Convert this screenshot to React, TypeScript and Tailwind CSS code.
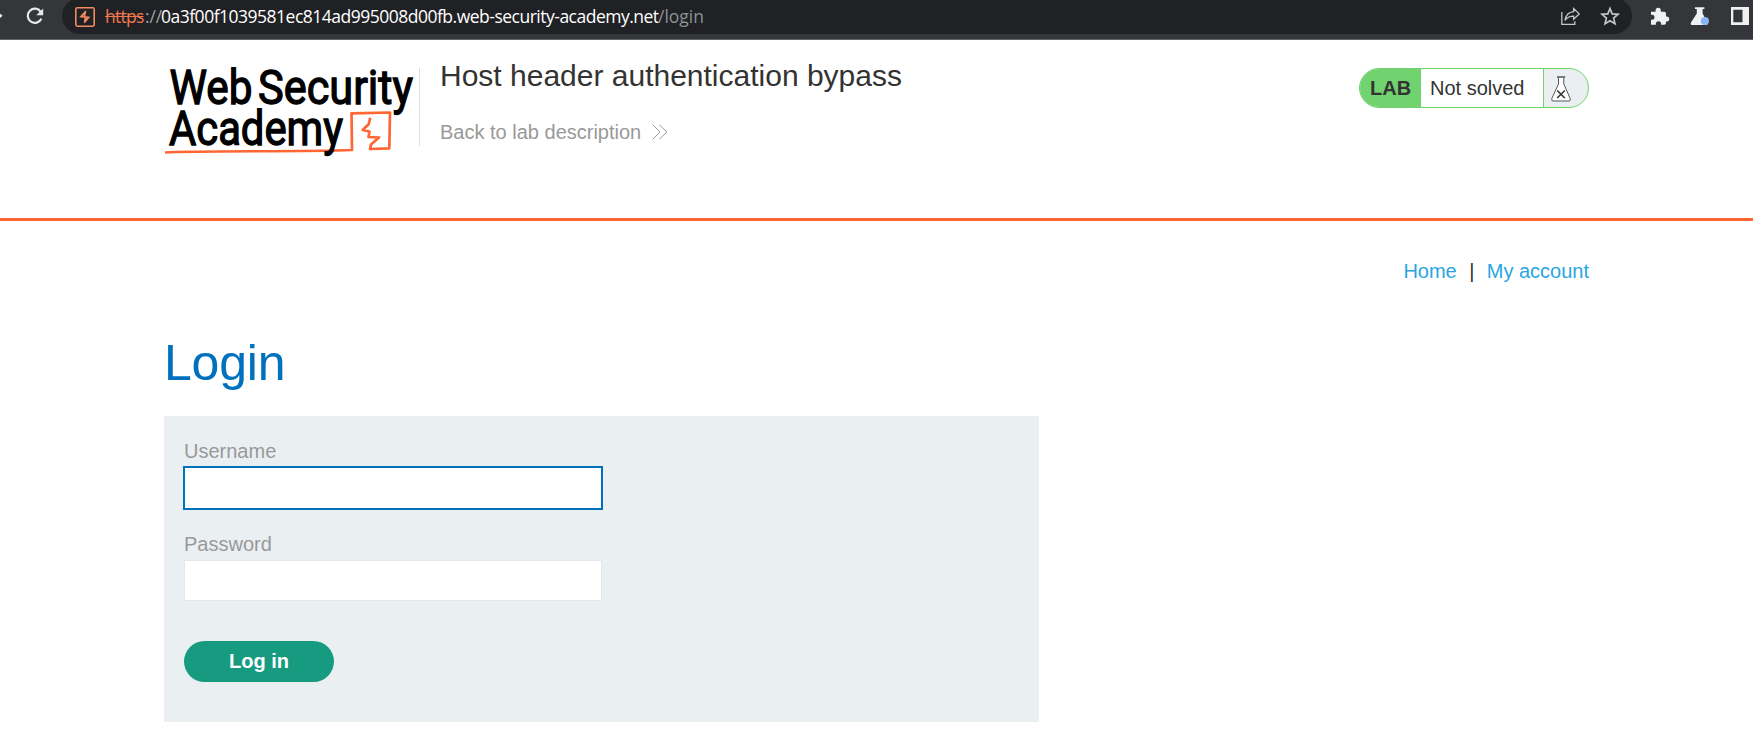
const SANS = "font-['Liberation_Sans',Arial,sans-serif]";

function BrowserBar() {
  return (
    <div className="flex h-10 w-full items-start overflow-hidden border-b border-[#646467] bg-[#35363a]">
      <svg className="h-[34px] w-[62px] shrink-0" viewBox="0 0 62 34" fill="none">
        <path d="M-2 11.5 L2.5 15.7 L-2 20" fill="#f1f1f2" />
        <path d="M40.8 11.8 A7.1 7.1 0 1 0 41.4 18.6" stroke="#e6e7e9" strokeWidth="2.2" />
        <path d="M43.2 8.5 V15.2 H36.2 Z" fill="#e6e7e9" />
      </svg>
      <div className="-mt-0.5 flex h-9 w-[1570px] shrink-0 items-center rounded-full bg-[#202124] pl-[13px]">
        <svg className="mt-0.5 mr-[10px] h-5 w-5 shrink-0" viewBox="0 0 20 20" fill="none">
          <rect x="0.8" y="0.8" width="18.4" height="18.4" rx="1.6" stroke="#f28b60" strokeWidth="1.6" />
          <path d="M11 4.2 L6 9.6 L13.6 10.4 L9.2 15.8 M10.2 5.4 L9.4 9.6 M10.6 10.4 L9.6 14.6" stroke="#f28b60" strokeWidth="1.7" />
        </svg>
        <div className="flex grow items-center whitespace-pre pt-px font-['Open_Sans','Noto_Sans',sans-serif] text-[17.5px] leading-none">
          <span className="w-[40px] tracking-[-0.75px] text-[#f0784f] line-through">https</span>
          <span className="w-4 tracking-[-0.1px] text-[#9aa0a6]">://</span>
          <span className="w-[497px] tracking-[-0.5px] text-white">
            0a3f00f1039581ec814ad995008d00fb.web-security-academy.net
          </span>
          <span className="text-[#8d9196]">/login</span>
        </div>
        <svg className="mt-0.5 mr-3 h-6 w-[60px] shrink-0" viewBox="0 0 60 24" fill="none" stroke="#c4c5c7">
          <path d="M1.8 7 V19.4 H14.8 V16.3" strokeWidth="1.3" />
          <path d="M13.6 3.5 L19.2 8.9 L13.6 14.2 V11.2 C9.5 11.2 7 12.3 5 15.4 C5.6 10.7 8.7 7.2 13.6 6.6 Z" strokeWidth="1.3" />
          <path d="M50 3.5 L52.2 8.9 L58 9.3 L53.6 13.1 L55 18.8 L50 15.7 L45 18.8 L46.4 13.1 L42 9.3 L47.8 8.9 Z" strokeWidth="1.7" />
        </svg>
      </div>
      <svg className="h-[34px] w-[121px] shrink-0" viewBox="0 0 121 34" fill="none">
        <path d="M19 12.2 h4.6 v-1.4 a2.6 2.6 0 0 1 5.2 0 v1.4 h3.4 a1.8 1.8 0 0 1 1.8 1.8 v3 h.7 a2.5 2.5 0 0 1 0 5 H34 v1.6 a1.7 1.7 0 0 1 -1.7 1.7 h-3.2 v-1 a2.6 2.6 0 0 0 -5.2 0 v1 H19 v-5 h1 a2.5 2.5 0 0 0 0-5 h-1 Z" fill="#eff0f2" transform="translate(0 -0.5)" />
        <path d="M63 7.2 H72.4 V9 H70.6 V13.5 L75.5 22.5 Q76 25 74 25 H60 Q58 25 59 22.5 L64.8 13.5 V9 H63 Z" fill="#eff0f2" />
        <circle cx="72.9" cy="21" r="4.1" fill="#8ab4f8" />
        <path fillRule="evenodd" d="M99 7 H117 V25 H99 Z M101.3 9.8 V22.3 H110.5 V9.8 Z" fill="#eff0f2" />
      </svg>
    </div>
  );
}

function Logo() {
  return (
    <svg className="-ml-1 h-[110px] w-[257px] shrink-0 overflow-visible" viewBox="160 50 257 110" fill="none">
      <g fill="#000" stroke="#000" strokeWidth="1.3" className="font-['Roboto',sans-serif] font-normal" fontSize="47.5">
        <text x="169.5" y="103.9" textLength="83" lengthAdjust="spacingAndGlyphs">Web</text>
        <text x="258" y="103.9" textLength="155" lengthAdjust="spacingAndGlyphs">Security</text>
      </g>
      <path d="M165 152.5 C200 150.5 300 152 352 150 L351.5 113.3 L390 112.5 L389.3 148.3 L370 149 L371 144.5 L379 137.5 L368.5 137 L369.5 131.5 L362.7 130 L368.8 124 L370.2 117.7" stroke="#ff6633" strokeWidth="2.7" strokeLinejoin="round" />
      <text x="169" y="144.7" textLength="174" lengthAdjust="spacingAndGlyphs" fontSize="47.5" fill="#000" stroke="#000" strokeWidth="1.3" className="font-['Roboto',sans-serif] font-normal">Academy</text>
    </svg>
  );
}

function LabStatus() {
  return (
    <div className="mt-7 flex h-10 w-[230px] shrink-0 overflow-hidden rounded-full border border-[#71d36f] bg-[#eaeff2] text-[20px] leading-[38px] text-[#333332]">
      <div className="w-[61px] bg-[#71d36f] pl-2.5 font-bold">LAB</div>
      <div className="w-[122px] bg-white pl-[9px]">Not solved</div>
      <div className="grow border-l border-[#71d36f]">
        <svg className="mt-[7px] ml-[7px] h-[26px] w-5" viewBox="0 0 20 26" fill="none">
          <path d="M7.5 1.5 V8 L0.8 22.5 Q0.3 25 2 25 H18 Q19.8 25 19.2 22.5 L12.8 8 V1.5" fill="#fff" stroke="#55565a" />
          <path d="M6 1 H14.2" stroke="#55565a" strokeWidth="1.4" />
          <path d="M6.2 14.5 L13.8 22 M13.8 14.5 L6.2 22" stroke="#333" strokeWidth="1.6" />
        </svg>
      </div>
    </div>
  );
}

function AcademyHeader() {
  return (
    <header className="flex h-[181px] items-start border-b-[3px] border-[#ff6633] pr-[164px] pl-[164px]">
      <div className="mt-2.5 flex">
        <Logo />
      </div>
      <div className="mt-7 ml-0.5 h-[78px] w-px shrink-0 bg-[#dddddd]" />
      <div className="ml-5 flex grow flex-col">
        <h2 className="mt-[18px] text-[30px] leading-9 text-[#333332]">Host header authentication bypass</h2>
        <a className="mt-[26px] flex items-center text-[20px] leading-6 text-[#999999]">
          Back to lab description
          <svg className="ml-[11px] h-4 w-4" viewBox="0 0 16 16" fill="none" stroke="#999">
            <path d="M0.7 0.7 L8 8 L0.7 15.3 M7.5 0.7 L14.8 8 L7.5 15.3" />
          </svg>
        </a>
      </div>
      <LabStatus />
    </header>
  );
}

export default function App() {
  return (
    <div className={`${SANS} h-[754px] w-full overflow-hidden bg-white`}>
      <BrowserBar />
      <AcademyHeader />
      <main className="px-[164px]">
        <nav className="flex justify-end pt-[38px] text-[20px] leading-6 text-[#29a5e2]">
          <a>Home</a>
          <span className="w-[30px] text-center text-[#333332]">|</span>
          <a>My account</a>
        </nav>
        <h1 className="mt-[51px] text-[50px] leading-[58px] tracking-[-0.2px] text-[#0071bc]">Login</h1>
        <form className="mt-6 flex h-[306px] w-[875px] flex-col items-start bg-[#eaeff2] pt-[23px] pl-5 text-[20px] leading-6 text-[#999999]">
          <label>Username</label>
          <input className="mt-[3px] -ml-px h-11 w-[420px] border-2 border-[#0071bc] bg-white px-2 outline-none" />
          <label className="mt-[22px]">Password</label>
          <input type="password" className="mt-1 h-[41px] w-[418px] border border-[#e4e6e7] bg-white px-2 outline-none" />
          <button type="button" className="mt-10 h-[41px] w-[150px] rounded-full bg-[#169b80] pb-0.5 font-bold text-white">
            Log in
          </button>
        </form>
      </main>
    </div>
  );
}
